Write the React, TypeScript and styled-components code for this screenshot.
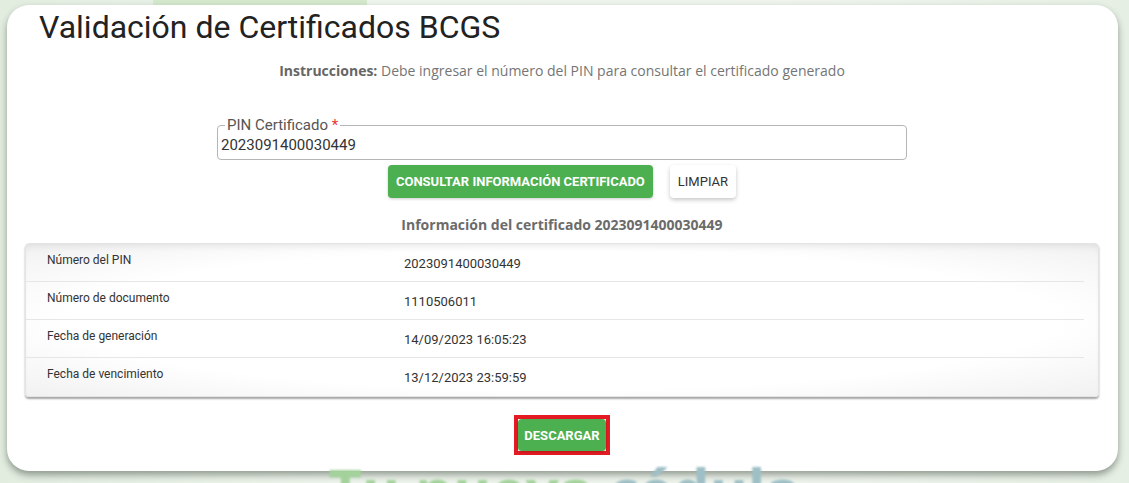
import styled, { createGlobalStyle } from 'styled-components'

const GlobalStyle = createGlobalStyle`
    html, body {
        margin: 0;
        padding: 0;
        background: #e9f1e7;
    }
    * {
        box-sizing: border-box;
    }
`

const rows = [
    { label: 'Número del PIN', value: '2023091400030449' },
    { label: 'Número de documento', value: '1110506011' },
    { label: 'Fecha de generación', value: '14/09/2023 16:05:23' },
    { label: 'Fecha de vencimiento', value: '13/12/2023 23:59:59' },
]

const App = () => {
    return (
        <Page>
            <GlobalStyle />
            <Backdrop>
                <TopBand />
                <BackText>
                    <span>Tu nueva</span> <em>cédula</em>
                </BackText>
            </Backdrop>
            <Card>
                <Title>Validación de Certificados BCGS</Title>
                <Instructions>
                    <b>Instrucciones:</b> Debe ingresar el número del PIN para consultar el certificado generado
                </Instructions>
                <Field>
                    <Legend>
                        PIN Certificado <Req>*</Req>
                    </Legend>
                    <Input defaultValue="2023091400030449" />
                </Field>
                <Actions>
                    <Button $variant="primary">Consultar información certificado</Button>
                    <Button>Limpiar</Button>
                </Actions>
                <InfoTitle>Información del certificado 2023091400030449</InfoTitle>
                <Table>
                    {rows.map((r) => (
                        <Row key={r.label}>
                            <Label>{r.label}</Label>
                            <Value>{r.value}</Value>
                        </Row>
                    ))}
                </Table>
                <Footer>
                    <Highlight>
                        <Button $variant="primary" $small>
                            Descargar
                        </Button>
                    </Highlight>
                </Footer>
            </Card>
        </Page>
    )
}

const Page = styled.div`
    display: grid;
    width: 1129px;
    height: 483px;
    overflow: hidden;
`

const Backdrop = styled.div`
    grid-area: 1 / 1;
    display: flex;
    flex-direction: column;
    justify-content: space-between;
    background: linear-gradient(90deg, #e2ede0 0%, #edf4eb 30%, #eef4ec 70%, #e6efe4 100%);
`

const TopBand = styled.div`
    margin-left: 153px;
    width: 214px;
    height: 8px;
    background: #d3e8cd;
`

const BackText = styled.div`
    align-self: center;
    margin: 0 0 -36px 0;
    font-family: 'Open Sans', sans-serif;
    font-weight: 700;
    font-size: 58px;
    line-height: 60px;
    color: #a3d29b;
    filter: blur(1.2px);
    em {
        font-style: normal;
        color: #9ebfc5;
    }
`

const Card = styled.main`
    grid-area: 1 / 1;
    align-self: start;
    margin: 5px 11px 0 7px;
    height: 466px;
    background: #fff;
    border-radius: 22px;
    box-shadow: 0 4px 7px rgba(40, 50, 40, 0.45);
    padding: 0 19px 0 18px;
    display: flex;
    flex-direction: column;
    align-items: center;
`

const Title = styled.h1`
    align-self: stretch;
    margin: 4px 0 0 14px;
    font-family: Roboto, sans-serif;
    font-weight: 400;
    font-size: 32px;
    line-height: 36px;
    color: #222;
`

const Instructions = styled.p`
    margin: 16px 0 0;
    font-family: 'Open Sans', sans-serif;
    font-size: 14px;
    line-height: 20px;
    color: #757575;
    b {
        font-weight: 700;
        color: #666;
    }
`

const Field = styled.fieldset`
    margin: 36px 0 0;
    width: 690px;
    padding: 3px 3px 5px;
    border: 1px solid #b5b5b5;
    border-radius: 4px;
`

const Legend = styled.legend`
    margin-left: 4px;
    padding: 0 2px;
    font-family: Roboto, sans-serif;
    font-size: 15px;
    line-height: 16px;
    color: #555;
`

const Req = styled.span`
    color: #e53935;
`

const Input = styled.input`
    display: block;
    width: 100%;
    border: 0;
    outline: 0;
    padding: 0;
    height: 18px;
    font-family: Roboto, sans-serif;
    font-size: 15px;
    color: #333;
    background: transparent;
`

const Actions = styled.div`
    margin-top: 5px;
    display: flex;
    gap: 17px;
`

const Button = styled.button<{ $variant?: 'primary'; $small?: boolean }>`
    height: ${(p) => (p.$small ? '32px' : '33px')};
    padding: 0 ${(p) => (p.$small ? '6px' : '8px')};
    border: 0;
    border-radius: 4px;
    font-family: Roboto, sans-serif;
    font-weight: ${(p) => (p.$variant === 'primary' ? 700 : 400)};
    font-size: 13px;
    text-transform: uppercase;
    background: ${(p) => (p.$variant === 'primary' ? '#4caf50' : '#fff')};
    color: ${(p) => (p.$variant === 'primary' ? '#fff' : '#333')};
    box-shadow: ${(p) =>
        p.$variant === 'primary' ? '0 1px 3px rgba(0,0,0,0.2)' : '0 2px 4px rgba(0,0,0,0.22)'};
`

const InfoTitle = styled.h2`
    margin: 17px 0 0;
    font-family: 'Open Sans', sans-serif;
    font-weight: 700;
    font-size: 14px;
    line-height: 20px;
    color: #6b6b6b;
`

const Table = styled.div`
    align-self: stretch;
    margin-top: 8px;
    padding-right: 14px;
    border: 1px solid #e4e4e4;
    border-radius: 4px;
    background: radial-gradient(ellipse at center, #fff 65%, #f1f1f1 100%);
    box-shadow: inset 0 6px 10px -6px rgba(0, 0, 0, 0.12), 0 2px 2px rgba(0, 0, 0, 0.35);
`

const Row = styled.div`
    display: grid;
    grid-template-columns: 378px 1fr;
    height: 38px;
    border-bottom: 1px solid #e6e6e6;
    &:last-child {
        border-bottom: 0;
    }
`

const Label = styled.div`
    padding: 8px 0 0 21px;
    font-family: Roboto, sans-serif;
    font-size: 12px;
    line-height: 16px;
    color: #333;
`

const Value = styled.div`
    padding-top: 12px;
    font-family: Roboto, sans-serif;
    font-size: 13px;
    line-height: 16px;
    color: #333;
`

const Footer = styled.div`
    margin-top: 18px;
`

const Highlight = styled.div`
    border: 4px solid #e41b23;
    display: flex;
`

export default App
